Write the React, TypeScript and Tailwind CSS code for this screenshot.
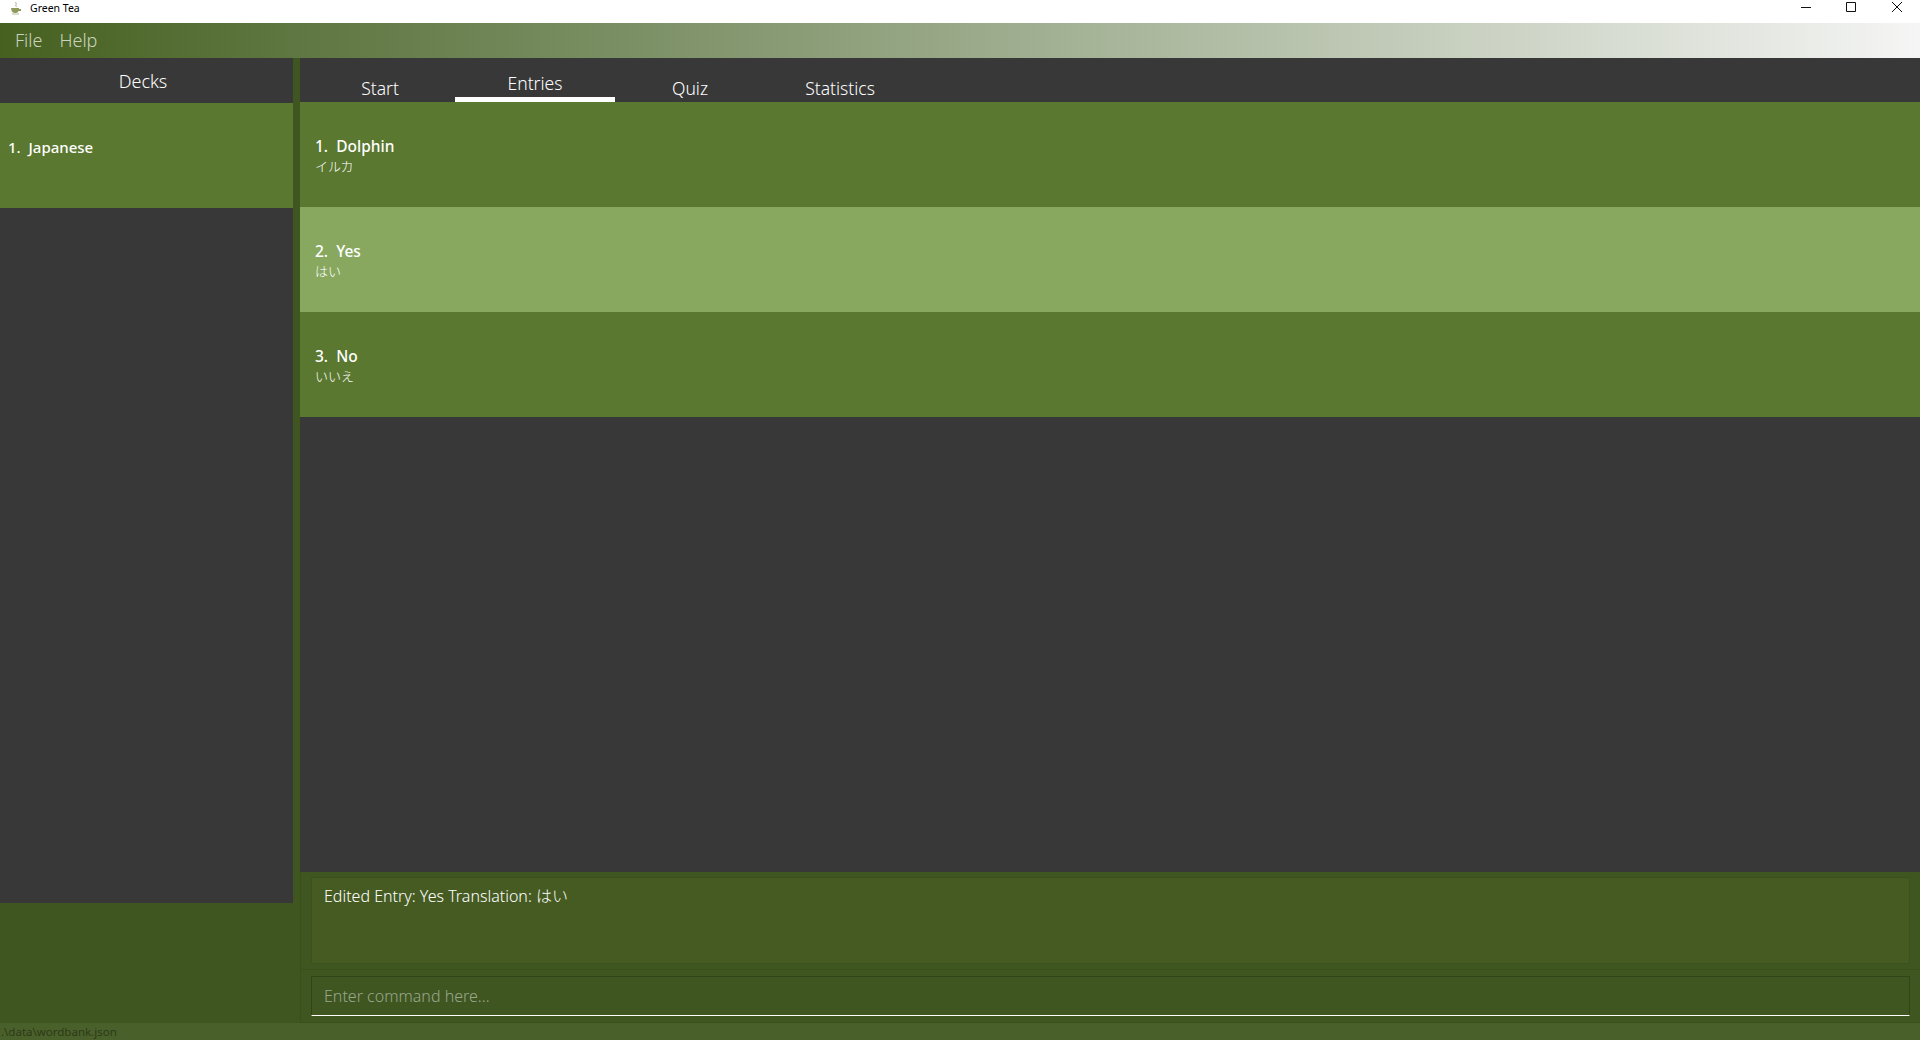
const font = { fontFamily: '"Noto Sans", "Noto Sans CJK JP", sans-serif' };

const entries = [
  { name: "1.  Dolphin", translation: "イルカ", selected: false },
  { name: "2.  Yes", translation: "はい", selected: true },
  { name: "3.  No", translation: "いいえ", selected: false },
];

const tabs = [
  { label: "Start", width: "w-[150px]", active: false },
  { label: "Entries", width: "w-[160px]", active: true },
  { label: "Quiz", width: "w-[150px]", active: false },
  { label: "Statistics", width: "w-[150px]", active: false },
];

export default function App() {
  return (
    <div style={font} className="flex h-[1040px] w-[1920px] flex-col overflow-hidden bg-[#3f5620]">
      <TitleBar />

      <div className="flex h-[35px] shrink-0 items-center gap-[17px] bg-gradient-to-r from-[#46611f] to-[#f5f5f5] pl-[15px] text-[18px] font-light text-[#c9d3bd]">
        <span>File</span>
        <span>Help</span>
      </div>

      <div className="flex min-h-0 flex-1">
        <div className="flex w-[293px] shrink-0 flex-col">
          <div className="flex h-[45px] shrink-0 items-center justify-center bg-[#383838] pr-[7px] pt-[2px] text-[18px] font-light text-white">
            Decks
          </div>
          <div className="h-[105px] shrink-0 bg-[#5a7830] pl-2 pt-[32px] text-[15px] font-medium leading-[24px] whitespace-pre text-white">
            1.  Japanese
          </div>
          <div className="h-[695px] shrink-0 bg-[#383838]" />
        </div>

        <div className="w-[7px] shrink-0 bg-[#3f5620]" />

        <div className="flex min-w-0 flex-1 flex-col">
          <div className="flex h-[44px] shrink-0 items-end bg-[#383838] pl-[5px]">
            {tabs.map((tab) => (
              <div
                key={tab.label}
                className={`${tab.width} text-center text-[17.5px] font-light leading-[26px] text-white ${
                  tab.active ? "border-b-[5px] border-white pb-[1px]" : "pb-[1px]"
                }`}
              >
                {tab.label}
              </div>
            ))}
          </div>

          <div className="flex flex-1 flex-col bg-[#383838]">
            {entries.map((entry) => (
              <div
                key={entry.name}
                className={`h-[105px] pl-[15px] pt-[32px] text-white ${entry.selected ? "bg-[#88a860]" : "bg-[#5a7830]"}`}
              >
                <div className="whitespace-pre text-[15.5px] font-medium leading-[24px]">{entry.name}</div>
                <div className="text-[13px] font-light leading-[17px]">{entry.translation}</div>
              </div>
            ))}
          </div>

          <div className="h-[98px] shrink-0 border-b border-l border-[#38501c] bg-[#3f5620] pb-[5px] pl-[10px] pr-[10px] pt-[5px]">
            <div className="h-full border border-[#3b5220] bg-[#465b22] pl-[12px] pt-[6px] text-[16px] font-light leading-[24px] text-white">
              Edited Entry: Yes Translation: はい
            </div>
          </div>

          <div className="h-[53px] shrink-0 border-b border-l border-[#38501c] bg-[#3f5620] pl-[10px] pr-[10px] pt-[6px]">
            <div className="flex h-[40px] items-center border border-[#2f4516] border-b-white bg-[#3f5620] pl-[12px]">
              <input
                readOnly
                placeholder="Enter command here..."
                className="w-full bg-transparent text-[16px] font-light text-white outline-none placeholder:text-[#9aa68e]"
              />
            </div>
          </div>
        </div>
      </div>

      <div className="flex h-[17px] shrink-0 items-center bg-[#4a602a] pl-px text-[11.5px] text-[#2b3a18]">
        .\data\wordbank.json
      </div>
    </div>
  );
}

function TitleBar() {
  return (
    <div className="flex h-[23px] shrink-0 items-start bg-white pt-[1px] text-black">
      <TeaIcon />
      <span className="ml-[8px] text-[10.5px] leading-[14px]">Green Tea</span>
      <div className="ml-auto flex items-center">
        <svg width="12" height="12" viewBox="0 0 12 12" className="mr-[33px]" fill="none" stroke="#111">
          <path d="M1 6.5h10" />
        </svg>
        <svg width="12" height="12" viewBox="0 0 12 12" className="mr-[34px]" fill="none" stroke="#111">
          <path d="M1.5 1.5h9v9h-9z" />
        </svg>
        <svg width="12" height="12" viewBox="0 0 12 12" className="mr-[17px]" fill="none" stroke="#111">
          <path d="M1 1l10 10M11 1L1 11" />
        </svg>
      </div>
    </div>
  );
}

function TeaIcon() {
  return (
    <svg width="12" height="14" viewBox="0 0 12 14" className="ml-[10px]">
      <path d="M6 1c-1 1 1 2 0 3s1 1 0 2" fill="none" stroke="#a8ad8c" strokeWidth="1" />
      <path d="M1 7h8v1h2v2H8.5c-.5 1.5-1.500 2-3.500 2S2 11 1.500 9.500z" fill="#8f9a5c" />
      <path d="M2 13h7" stroke="#b8bca4" strokeWidth="1" />
    </svg>
  );
}
